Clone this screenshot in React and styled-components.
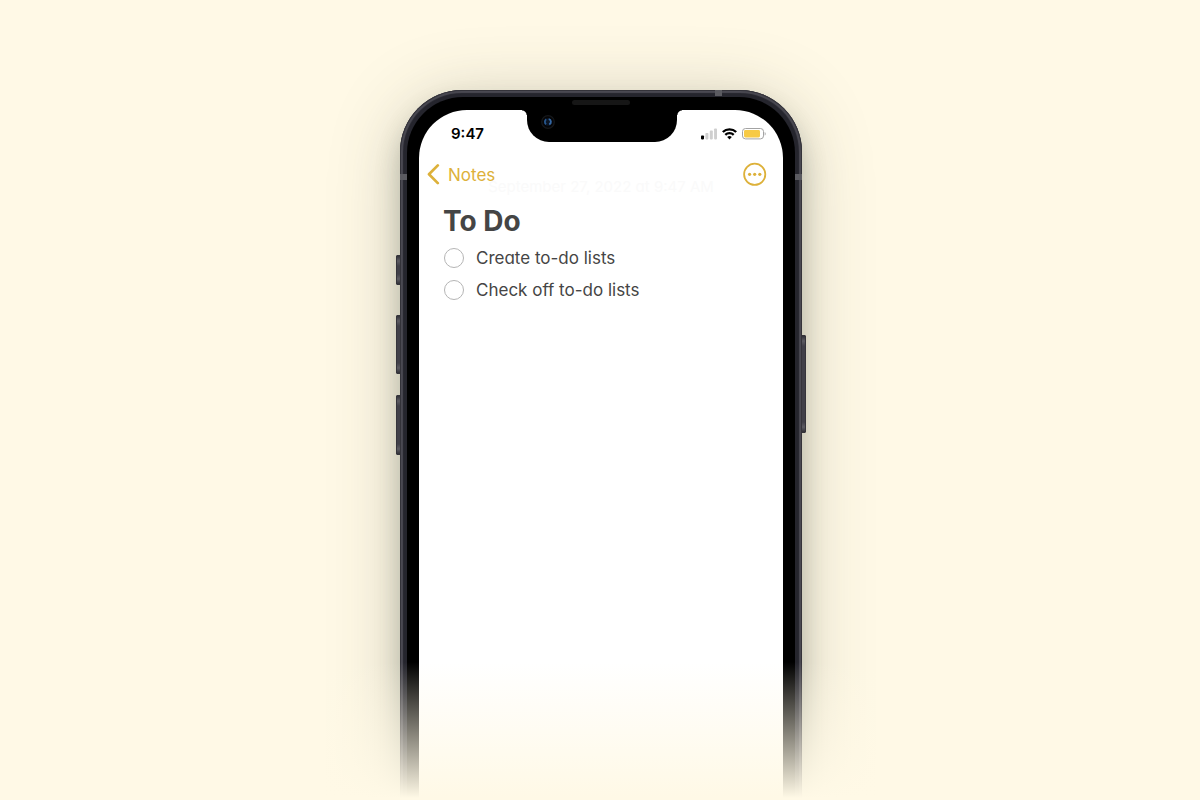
import React, { useState } from "react"
import styled, { createGlobalStyle } from "styled-components";

const todos = [
  { id: "create", text: "Create to-do lists" },
  { id: "check", text: "Check off to-do lists" },
];

const SignalIcon = () => (
  <svg width="16" height="12" viewBox="0 0 16 12" aria-hidden="true">
    <rect x="0" y="7.4" width="3" height="4" rx="0.8" fill="#000" />
    <rect x="4.4" y="5" width="3" height="6.4" rx="0.8" fill="#cfcfcf" />
    <rect x="8.8" y="2.6" width="3" height="8.8" rx="0.8" fill="#cfcfcf" />
    <rect x="13.1" y="0.4" width="2.9" height="11" rx="0.8" fill="#cfcfcf" />
  </svg>
)

const WifiIcon = () => (
  <svg width="15" height="12" viewBox="0 0 15 12" fill="none" stroke="#000" strokeWidth="2.3" aria-hidden="true">
    <path d="M.8 4a9.6 9.6 0 0 1 13.4 0" />
    <path d="M3.3 6.9a6 6 0 0 1 8.4 0" />
    <path d="M7.5 11.5 5.2 9.1a3.4 3.4 0 0 1 4.6 0z" fill="#000" stroke="none" />
  </svg>
)

const BatteryIcon = () => (
  <svg width="24" height="12" viewBox="0 0 24 12" aria-hidden="true">
    <rect x="0.5" y="0.5" width="21" height="10.4" rx="3" fill="#fff" stroke="#a3a3a3" />
    <rect x="2" y="2" width="16" height="7.4" rx="1.4" fill="#f7ca45" />
    <path d="M22.7 3.9v3.6c1.3-.5 1.3-3.1 0-3.6z" fill="#a3a3a3" />
  </svg>
)

const BackIcon = () => (
  <svg width="13" height="22" viewBox="0 0 13 22" fill="none" aria-hidden="true">
    <path d="M10.8 2.4 2 11.3l8.8 8.8" stroke="#ddb13a" strokeWidth="2.7" strokeLinecap="round" strokeLinejoin="round" />
  </svg>
)

const MoreIcon = () => (
  <svg width="24" height="24" viewBox="0 0 24 24" aria-hidden="true">
    <circle cx="11.7" cy="12.3" r="10.6" fill="none" stroke="#ddb13a" strokeWidth="1.8" />
    <circle cx="6.6" cy="12.3" r="1.6" fill="#ddb13a" />
    <circle cx="11.7" cy="12.3" r="1.6" fill="#ddb13a" />
    <circle cx="16.8" cy="12.3" r="1.6" fill="#ddb13a" />
  </svg>
)

const CameraIcon = () => (
  <svg width="14" height="14" viewBox="0 0 14 14" fill="none" aria-hidden="true">
    <circle cx="7" cy="7" r="6.3" fill="#050507" stroke="#15171a" strokeWidth="1.2" />
    <circle cx="7" cy="7" r="3.8" fill="#0b1626" />
    <path d="M5.2 4.2c-1.7 1.2-1.7 3.8-.2 5.2" stroke="#27578e" strokeWidth="1.8" />
    <path d="M7.7 4.2c2.7.4 3 4 .5 5.2" stroke="#3467a3" strokeWidth="1.8" />
  </svg>
)

const App = () => {
  const [done, setDone] = useState({});

  const toggle = (id) => {
    setDone({ ...done, [id]: !done[id] })
  }

  return (
    <Page>
      <GlobalStyle />
      <Phone>
        <SideButton $side="left" $top={165} $height={30} />
        <SideButton $side="left" $top={225} $height={59} />
        <SideButton $side="left" $top={305} $height={60} />
        <SideButton $side="right" $top={245} $height={98} />
        <Antenna $place="top" />
        <Antenna $place="left" />
        <Antenna $place="right" />
        <Bezel>
          <Speaker />
          <Screen>
            <StatusBar>
              <Time>9:47</Time>
              <Notch>
                <CameraIcon />
              </Notch>
              <Indicators>
                <SignalIcon />
                <WifiIcon />
                <BatteryIcon />
              </Indicators>
            </StatusBar>
            <NavBar>
              <BackLink href="#notes">
                <BackIcon />
                <span>Notes</span>
              </BackLink>
              <MoreButton type="button" aria-label="More">
                <MoreIcon />
              </MoreButton>
            </NavBar>
            <Note>
              <DateLine>September 27, 2022 at 9:47 AM</DateLine>
              <Title>To Do</Title>
              <List>
                {todos.map((todo) => (
                  <Item key={todo.id}>
                    <Check
                      id={todo.id}
                      type="checkbox"
                      checked={!!done[todo.id]}
                      onChange={() => toggle(todo.id)}
                    />
                    <label htmlFor={todo.id}>{todo.text}</label>
                  </Item>
                ))}
              </List>
            </Note>
          </Screen>
        </Bezel>
      </Phone>
      <Fade />
    </Page>
  )
}

export default App

const GlobalStyle = createGlobalStyle`
    * {
      box-sizing: border-box;
    }
    body {
      margin: 0;
      background: #fff9e6;
      font-family: Inter, "Liberation Sans", sans-serif;
      font-feature-settings: "cv11";
    }
`;

const Page = styled.main`
    position: relative;
    display: flex;
    justify-content: center;
    height: 100vh;
    padding: 90px 0 0 2px;
    overflow: hidden;
`;

const Phone = styled.div`
    position: relative;
    flex: 0 1 402px;
    display: flex;
    height: 120vh;
    padding: 7px;
    border-radius: 62px;
    background: #25252d;
    box-shadow:
      inset 0 0 0 1px #34333a,
      inset 0 0 1px 3px #4a4952,
      0 16px 24px rgba(50, 70, 60, 0.26),
      0 10px 70px rgba(60, 65, 45, 0.26);
`;

const SideButton = styled.span`
    position: absolute;
    top: ${({ $top }) => $top}px;
    ${({ $side }) => $side}: -4px;
    width: 5px;
    height: ${({ $height }) => $height}px;
    border: 1px solid #34333a;
    border-radius: 1px;
    background: linear-gradient(#303037, #5c5b62 5px, #403f48 10px, #403f48 calc(100% - 10px), #5c5b62 calc(100% - 5px), #303037);
`;

const places = {
  top: "top: 0; right: 80px; height: 6px;",
  left: "top: 84px; left: 0; height: 6px;",
  right: "top: 84px; right: 0; height: 6px;",
};

const Antenna = styled.span`
    position: absolute;
    width: 7px;
    background: #5b5b61;
    ${({ $place }) => places[$place]}
`;

const Bezel = styled.div`
    position: relative;
    flex: 1;
    display: flex;
    min-width: 0;
    padding: 13px 12px;
    border-radius: 56px;
    background: #000;
`;

const Speaker = styled.span`
    position: absolute;
    top: 3px;
    left: 50%;
    width: 58px;
    height: 5px;
    margin-left: -29px;
    border-radius: 3px;
    background: #161616;
`;

const Screen = styled.div`
    flex: 1;
    min-width: 0;
    border-radius: 48px;
    background: #fff;
    overflow: hidden;
`;

const StatusBar = styled.header`
    display: grid;
    grid-template-columns: 1fr 150px 106px;
    align-items: center;
    height: 48px;
`;

const Time = styled.time`
    padding-left: 32px;
    font-size: 15px;
    font-weight: 600;
    line-height: 20px;
    color: #000;
`;

const Notch = styled.div`
    position: relative;
    align-self: start;
    height: 32px;
    padding: 5px 14px;
    border-radius: 0 0 22px 22px;
    background: #000;
    &::before,
    &::after {
      content: "";
      position: absolute;
      top: 0;
      width: 5px;
      height: 5px;
    }
    &::before {
      right: 100%;
      background: radial-gradient(circle at 0 100%, transparent 4px, #000 5px);
    }
    &::after {
      left: 100%;
      background: radial-gradient(circle at 100% 100%, transparent 4px, #000 5px);
    }
    svg {
      display: block;
    }
`;

const Indicators = styled.div`
    display: flex;
    justify-content: flex-end;
    gap: 5px;
    padding-right: 17px;
`;

const NavBar = styled.nav`
    display: flex;
    justify-content: space-between;
    align-items: center;
    height: 32px;
    padding: 0 16px 0 8px;
`;

const BackLink = styled.a`
    display: flex;
    align-items: center;
    gap: 8px;
    font-size: 17px;
    line-height: 24px;
    color: #ddb13a;
    text-decoration: none;
    span {
      padding-top: 2px;
    }
`;

const MoreButton = styled.button`
    display: flex;
    padding: 0;
    border: 0;
    background: none;
    cursor: pointer;
`;

const Note = styled.section`
    padding: 0 24px;
    color: #454545;
`;

const DateLine = styled.p`
    margin: -13px 0 6px;
    font-size: 15px;
    line-height: 20px;
    text-align: center;
    color: #fafafa;
`;

const Title = styled.h1`
    margin: 0 0 3px;
    font-size: 28px;
    font-weight: 700;
    line-height: 36px;
`;

const List = styled.ul`
    margin: 0;
    padding: 0 0 0 1px;
    list-style: none;
`;

const Item = styled.li`
    display: flex;
    align-items: center;
    gap: 12px;
    height: 32px;
    font-size: 17px;
    line-height: 24px;
`;

const Check = styled.input`
    appearance: none;
    width: 20px;
    height: 20px;
    margin: 0;
    border: 1px solid #b5b5b5;
    border-radius: 50%;
    background: #fff;
    &:checked {
      border-color: #ddb13a;
      background: #ddb13a;
    }
`;

const Fade = styled.div`
    position: absolute;
    right: 0;
    bottom: 0;
    left: 0;
    height: 138px;
    background: linear-gradient(rgba(255, 249, 230, 0), #fff9e6 136px);
    pointer-events: none;
`;
